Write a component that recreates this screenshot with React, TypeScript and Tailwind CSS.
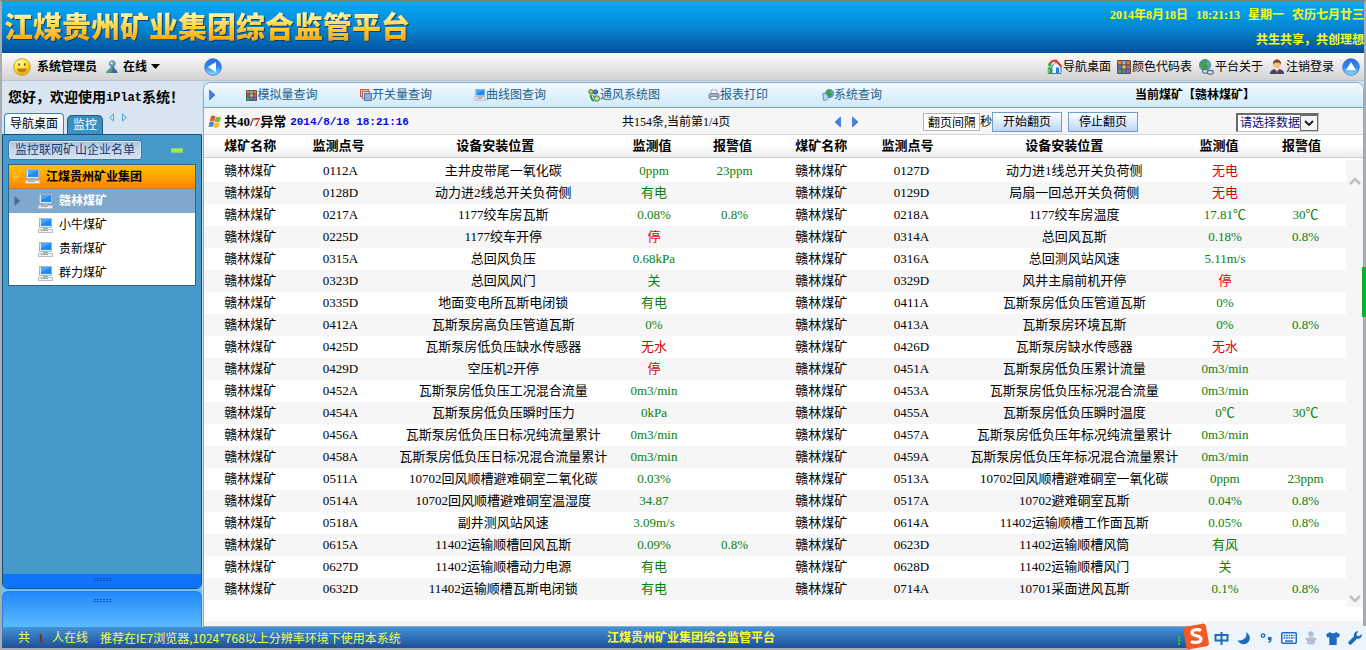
import React from "react";

type Reading = [
  code: string,
  place: string,
  value: string,
  alarm?: string,
  bad?: boolean,
];

const leftRows: Reading[] = [
  ["0112A", "主井皮带尾一氧化碳", "0ppm", "23ppm"],
  ["0128D", "动力进2线总开关负荷侧", "有电"],
  ["0217A", "1177绞车房瓦斯", "0.08%", "0.8%"],
  ["0225D", "1177绞车开停", "停", "", true],
  ["0315A", "总回风负压", "0.68kPa"],
  ["0323D", "总回风风门", "关"],
  ["0335D", "地面变电所瓦斯电闭锁", "有电"],
  ["0412A", "瓦斯泵房高负压管道瓦斯", "0%"],
  ["0425D", "瓦斯泵房低负压缺水传感器", "无水", "", true],
  ["0429D", "空压机2开停", "停", "", true],
  ["0452A", "瓦斯泵房低负压工况混合流量", "0m3/min"],
  ["0454A", "瓦斯泵房低负压瞬时压力", "0kPa"],
  ["0456A", "瓦斯泵房低负压日标况纯流量累计", "0m3/min"],
  ["0458A", "瓦斯泵房低负压日标况混合流量累计", "0m3/min"],
  ["0511A", "10702回风顺槽避难硐室二氧化碳", "0.03%"],
  ["0514A", "10702回风顺槽避难硐室温湿度", "34.87"],
  ["0518A", "副井测风站风速", "3.09m/s"],
  ["0615A", "11402运输顺槽回风瓦斯", "0.09%", "0.8%"],
  ["0627D", "11402运输顺槽动力电源", "有电"],
  ["0632D", "11402运输顺槽瓦斯电闭锁", "有电"],
];

const rightRows: Reading[] = [
  ["0127D", "动力进1线总开关负荷侧", "无电", "", true],
  ["0129D", "局扇一回总开关负荷侧", "无电", "", true],
  ["0218A", "1177绞车房温度", "17.81℃", "30℃"],
  ["0314A", "总回风瓦斯", "0.18%", "0.8%"],
  ["0316A", "总回测风站风速", "5.11m/s"],
  ["0329D", "风井主扇前机开停", "停", "", true],
  ["0411A", "瓦斯泵房低负压管道瓦斯", "0%"],
  ["0413A", "瓦斯泵房环境瓦斯", "0%", "0.8%"],
  ["0426D", "瓦斯泵房缺水传感器", "无水", "", true],
  ["0451A", "瓦斯泵房低负压累计流量", "0m3/min"],
  ["0453A", "瓦斯泵房低负压标况混合流量", "0m3/min"],
  ["0455A", "瓦斯泵房低负压瞬时温度", "0℃", "30℃"],
  ["0457A", "瓦斯泵房低负压年标况纯流量累计", "0m3/min"],
  ["0459A", "瓦斯泵房低负压年标况混合流量累计", "0m3/min"],
  ["0513A", "10702回风顺槽避难硐室一氧化碳", "0ppm", "23ppm"],
  ["0517A", "10702避难硐室瓦斯", "0.04%", "0.8%"],
  ["0614A", "11402运输顺槽工作面瓦斯", "0.05%", "0.8%"],
  ["0623D", "11402运输顺槽风筒", "有风"],
  ["0628D", "11402运输顺槽风门", "关"],
  ["0714A", "10701采面进风瓦斯", "0.1%", "0.8%"],
];

const headings: [string, string][] = [
  ["煤矿名称", "pl-2"],
  ["监测点号", "pr-1"],
  ["设备安装位置", "pr-4"],
  ["监测值", "pr-1"],
  ["报警值", "pr-1"],
  ["煤矿名称", "pl-2"],
  ["监测点号", "pr-2"],
  ["设备安装位置", "pr-5"],
  ["监测值", "pr-3"],
  ["报警值", "pr-2"],
];

function Smiley() {
  return (
    <svg width="18" height="18" viewBox="0 0 18 18" aria-hidden="true">
      <defs>
        <radialGradient id="smile" cx="0.4" cy="0.25" r="0.8">
          <stop offset="0" stopColor="#fffbb0" />
          <stop offset="0.5" stopColor="#ffdf3c" />
          <stop offset="1" stopColor="#e8a008" />
        </radialGradient>
      </defs>
      <circle cx="9" cy="9" r="8.4" fill="url(#smile)" stroke="#c89a18" strokeWidth="0.8" />
      <ellipse cx="6.200" cy="6.500" rx="0.900" ry="1.500" fill="#8a5a08" />
      <ellipse cx="11.800" cy="6.500" rx="0.900" ry="1.500" fill="#8a5a08" />
      <path d="M4 10.500h10c-.6 3-2.600 4-5 4s-4.400-1-5-4z" fill="#c07818" />
    </svg>
  );
}

function Pawn() {
  return (
    <svg width="14" height="14" viewBox="0 0 14 14" aria-hidden="true">
      <path d="M6.500 6C5.500 9 2 9.500 1 13h11.500C12 9.500 8.500 9 8.500 6z" fill="#4c9a92" />
      <path d="M7.500 6C8 9.500 8 11 6 13h6.500C12 9.500 8.500 9 8.500 6z" fill="#3d5ea8" />
      <circle cx="7.300" cy="3.700" r="3" fill="#6a9fc0" stroke="#3f7488" strokeWidth="0.6" />
      <circle cx="6.500" cy="2.900" r="1.200" fill="#d5ecf2" />
    </svg>
  );
}

function RoundArrow({ up }: { up?: boolean }) {
  return (
    <svg width="18" height="18" viewBox="0 0 18 18" aria-hidden="true">
      <defs>
        <linearGradient id={up ? "ballUp" : "ballLeft"} x1="0" y1="0" x2="0" y2="1">
          <stop offset="0" stopColor="#2c6be0" />
          <stop offset="0.5" stopColor="#2b8af2" />
          <stop offset="1" stopColor="#8fe8ff" />
        </linearGradient>
      </defs>
      <circle
        cx="9"
        cy="9"
        r="8.300"
        fill={up ? "url(#ballUp)" : "url(#ballLeft)"}
        stroke="#3a6cc8"
        strokeWidth="0.800"
      />
      <path d={up ? "M9 4l5 8.200H4z" : "M3.800 9l8.200-5v10z"} fill="#fff" />
    </svg>
  );
}

function Windows() {
  return (
    <svg width="14" height="14" viewBox="0 0 14 14" aria-hidden="true">
      <path d="M3 1.200c1.500-1 3-.8 4.200 0L6.300 6.400C5 5.600 3.500 5.600 1.800 6.400z" fill="#e8502a" />
      <path d="M7.700 1.600c1.500.9 3.300.8 5.300-.2l-1.100 5.100c-1.600 1-3.600 1-5.200.2z" fill="#7fb93a" />
      <path d="M1.600 7.100c1.500-.9 3-.8 4.400 0l-1 4.900C3.700 11.300 2.200 11.300.5 12.100z" fill="#4a82cf" />
      <path d="M6.500 7.400c1.500.9 3.500.8 5.200-.2l-1.100 4.900c-1.600 1-3.500 1-5.100.2z" fill="#f6c12c" />
    </svg>
  );
}

function ColorGrid({ size }: { size: number }) {
  const colors = [
    "#f08a20", "#8fb0f0", "#e07a30",
    "#4a78c8", "#f0c040", "#c05aa0",
    "#4fb060", "#4a80e8", "#7a65c8",
  ];
  return (
    <svg width={size} height={size} viewBox="0 0 13 13" aria-hidden="true">
      <rect width="13" height="13" rx="1" fill="#5a5048" />
      {colors.map((c, i) => (
        <rect key={i} x={1 + (i % 3) * 4} y={1 + Math.floor(i / 3) * 4} width="3" height="3" fill={c} />
      ))}
    </svg>
  );
}

function Layers() {
  return (
    <svg width="12" height="12" viewBox="0 0 12 12" aria-hidden="true">
      <rect x="0.500" y="0.500" width="8" height="7" fill="#f0c0a8" stroke="#c8583c" />
      <rect x="2.500" y="2.500" width="7" height="7" fill="#d8dce8" stroke="#b06a68" />
      <rect x="4.500" y="4.500" width="7" height="7" fill="#8fb2e0" stroke="#5a78a8" />
    </svg>
  );
}

function Monitor({ size }: { size: number }) {
  return (
    <svg width={size} height={size} viewBox="0 0 15 15" aria-hidden="true">
      <rect x="1" y="0" width="13" height="10" fill="#a4b6c8" />
      <rect x="2" y="1" width="11" height="8" fill="#dfeaf4" />
      <rect x="3" y="1" width="10" height="7" fill="#1f8cf4" />
      <path d="M3 1h10L3 6z" fill="#4aa8fc" />
      <rect x="5" y="10" width="5" height="2" fill="#a0aebb" />
      <rect x="0" y="11" width="15" height="4" fill="#b4bec8" />
      <rect x="1" y="12" width="13" height="2" fill="#eef1f4" />
      <rect x="3" y="12" width="7" height="1" fill="#a8a8a8" />
    </svg>
  );
}

function Fans() {
  return (
    <svg width="12" height="13" viewBox="0 0 12 13" aria-hidden="true">
      <circle cx="3" cy="2.800" r="2.300" fill="#e8b83a" stroke="#2a6a50" strokeWidth="0.800" />
      <circle cx="7.500" cy="3" r="2.200" fill="#3a82c8" stroke="#1f4a80" strokeWidth="0.800" />
      <path d="M2 5.500l4 1 2 4.500-3 1.500C2.500 11 1.500 8 2 5.500z" fill="#2f9a4a" />
      <circle cx="8.800" cy="9.500" r="2.700" fill="#d8e05a" stroke="#2a6aa0" strokeWidth="1" />
      <path d="M4 6.500l2 4" stroke="#fff" strokeWidth="1" />
    </svg>
  );
}

function Printer() {
  return (
    <svg width="12" height="12" viewBox="0 0 12 12" aria-hidden="true">
      <path d="M3.500 1h5l1 4h-7z" fill="#fff" stroke="#8f97b4" strokeWidth="0.800" />
      <rect x="1" y="4.500" width="10" height="5" rx="1.500" fill="#a9b0cc" stroke="#70789c" strokeWidth="0.900" />
      <rect x="2.800" y="7.500" width="6.400" height="3" fill="#f2f4fa" stroke="#70789c" strokeWidth="0.800" />
      <path d="M7.500 6h2" stroke="#e0a030" />
    </svg>
  );
}

function Globe({ link }: { link?: boolean }) {
  return (
    <svg width={link ? 16 : 12} height={link ? 16 : 12} viewBox="0 0 16 16" aria-hidden="true">
      <circle cx={link ? 7 : 10} cy="6" r="5.500" fill="#5aa8e0" stroke="#2d6a7a" strokeWidth="0.800" />
      <path
        d={link ? "M3 3c2-2 5-2 7-1L8 5l3 2-3 4C4 10 3 8 2 6z" : "M6 3c2-2 5-2 7-1l-2 3 3 2-3 4C8 10 7 8 5 6z"}
        fill="#3f9f48"
      />
      {link ? (
        <g fill="none" stroke="#5f7290" strokeWidth="1.300">
          <rect x="4.500" y="10.500" width="6" height="3.600" rx="1.800" fill="#dfe6f0" />
          <rect x="9.300" y="11.500" width="6" height="3.600" rx="1.800" fill="#dfe6f0" />
        </g>
      ) : (
        <path d="M1 6h5l3 6-4 3H2z" fill="#b8d4f0" stroke="#3a78b8" />
      )}
    </svg>
  );
}

function House() {
  return (
    <svg width="15" height="16" viewBox="0 0 15 16" aria-hidden="true">
      <path d="M5 7l4-4 5 5v6.500H5z" fill="#e8f4fc" stroke="#3a7fb8" strokeWidth="1" />
      <path d="M2 5.500L5.500 2 9 1.500l5.700 6.300" fill="none" stroke="#e0382c" strokeWidth="2" />
      <rect x="9" y="8.500" width="3" height="6" fill="#2f7fd0" />
      <circle cx="2.800" cy="6" r="1.800" fill="#3bb04a" />
      <path d="M.8 8.500h4V15h-4z" fill="#2f9f42" />
      <path d="M2 10v4" stroke="#9fe0a0" />
    </svg>
  );
}

function Person() {
  return (
    <svg width="16" height="16" viewBox="0 0 16 16" aria-hidden="true">
      <path d="M1 15c0-3.500 2.500-4.500 5-5h4c2.500.5 5 1.500 5 5z" fill="#3f466c" />
      <path d="M6 10l2 4 2-4z" fill="#fff" />
      <path d="M7.500 11h1l.5 4H7z" fill="#b8302a" />
      <circle cx="8" cy="5.500" r="3.800" fill="#f0c08a" />
      <path d="M4 5.500C3.500 2 6 .5 8 .5s4.500 1.500 4 5C11 3.500 9 3.500 8 3.500S5 3.500 4 5.500z" fill="#7a431c" />
    </svg>
  );
}

function Triangle({ dir, tone }: { dir: "left" | "right"; tone: "solid" | "thin" }) {
  const d = dir === "left" ? "M6.500 1v10L1 6z" : "M0.500 1v10L6 6z";
  return tone === "solid" ? (
    <svg width="7" height="12" viewBox="0 0 7 12" aria-hidden="true">
      <path d={d} fill="#3f7fe8" stroke="#2a5fc0" strokeWidth="0.600" />
    </svg>
  ) : (
    <svg width="5" height="9" viewBox="0 0 7 12" aria-hidden="true">
      <path d={d} fill="#d8f0fc" stroke="#3a9ad0" strokeWidth="1.400" />
    </svg>
  );
}

const menu: [string, React.ReactNode][] = [
  ["模拟量查询", <ColorGrid size={11} />],
  ["开关量查询", <Layers />],
  ["曲线图查询", <Monitor size={12} />],
  ["通风系统图", <Fans />],
  ["报表打印", <Printer />],
  ["系统查询", <Globe />],
];

const tools: [string, React.ReactNode][] = [
  ["导航桌面", <House />],
  ["颜色代码表", <ColorGrid size={14} />],
  ["平台关于", <Globe link />],
  ["注销登录", <Person />],
];

function Header() {
  return (
    <header className="flex h-[51px] shrink-0 items-start justify-between overflow-hidden bg-linear-to-b from-[#08aaf5] via-[#0686d2] to-[#04509c]">
      <h1 className="bg-linear-to-b from-[#fff3a8] from-25% via-[#ffd84a] to-[#ffa800] to-80% bg-clip-text pt-[5px] pl-0.5 text-[29px] leading-[42px] font-black whitespace-nowrap text-transparent drop-shadow-[1px_1px_0px_#0a3f7a]">
        江煤贵州矿业集团综合监管平台
      </h1>
      <div className="pt-px text-right text-xs leading-[25px] font-bold whitespace-nowrap text-[#f4ff1e]">
        <p className="flex gap-2">
          <span>2014年8月18日</span>
          <span>18:21:13</span>
          <span>星期一</span>
          <span>农历七月廿三</span>
        </p>
        <p>共生共享，共创理想</p>
      </div>
    </header>
  );
}

function Toolbar() {
  return (
    <div className="flex h-7 shrink-0 items-center justify-between border-b border-[#b9c4cc] bg-linear-to-b from-[#fdfdfd] to-[#d2d2d2] pr-1 pl-[11px] text-xs whitespace-nowrap">
      <div className="flex items-center">
        <Smiley />
        <span className="ml-1.5 font-bold">系统管理员</span>
        <button className="ml-2 flex items-center font-bold">
          <Pawn />
          <span className="ml-1">在线</span>
          <svg className="ml-1" width="9" height="5" viewBox="0 0 9 5" aria-hidden="true">
            <path d="M0 0h9L4.500 5z" />
          </svg>
        </button>
        <button className="ml-11" aria-label="收起侧栏">
          <RoundArrow />
        </button>
      </div>
      <nav className="flex items-center gap-1.5">
        {tools.map(([label, icon]) => (
          <a key={label} href="#" className="flex items-center gap-px">
            {icon}
            {label}
          </a>
        ))}
        <button className="ml-0.5" aria-label="收起顶栏">
          <RoundArrow up />
        </button>
      </nav>
    </div>
  );
}

function Grip() {
  return (
    <svg width="17" height="5" viewBox="0 0 17 5" aria-hidden="true">
      <path d="M0 1.500h17M0 3.500h17" stroke="#0a4fb8" strokeDasharray="2 1" />
    </svg>
  );
}

function Sidebar() {
  return (
    <aside className="flex w-[200px] shrink-0 flex-col bg-linear-to-b from-[#d9e6f1] from-20% to-[#5cc0f8]">
      <p className="flex h-8 items-center pt-0.5 pl-1.5 text-sm font-bold whitespace-nowrap">
        您好，欢迎使用
        <span className="font-['Liberation_Mono'] text-xs">iPlat</span>
        系统！
      </p>
      <div className="flex h-[21px] items-end pl-0.5 text-xs">
        <button className="h-[21px] rounded-t-[4px] border border-b-0 border-[#3d84b4] bg-linear-to-b from-white to-[#e2eff8] px-[5px]">
          导航桌面
        </button>
        <button className="ml-[3px] h-[19px] rounded-t-[5px] border border-b-0 border-[#1c5c88] bg-linear-to-b from-[#3f8cbc] to-[#3a93c6] px-[5px] text-white">
          监控
        </button>
        <div className="flex gap-2 self-start pl-1.5">
          <Triangle dir="left" tone="thin" />
          <Triangle dir="right" tone="thin" />
        </div>
      </div>
      <div className="flex flex-1 flex-col overflow-hidden rounded-b-[6px] border border-[#12507f] bg-[#459acb]">
        <div className="flex items-center justify-between pt-[5px] pr-[18px] pl-[5px]">
          <button className="h-5 rounded-[3px] border border-[#3f77a4] bg-linear-to-b from-[#a9c4dc] via-[#c8d9e8] to-[#d6e1ec] px-[6px] text-xs leading-[18px] text-[#12397c] shadow-[inset_0_0_0_1px_#d8e4ee]">
            监控联网矿山企业名单
          </button>
          <button aria-label="折叠" className="h-[5px] w-3 border border-[#8cd070] bg-[#a4ec40]" />
        </div>
        <ul className="mx-[5px] mt-1 border border-[#2a6590] bg-white text-xs">
          <li>
            <a href="#" className="flex h-6 items-center border-b border-[#c87820] bg-linear-to-b from-[#ffc400] to-[#ff8400] pl-1 font-bold">
              <svg width="6" height="10" viewBox="0 0 6 10" aria-hidden="true">
                <path d="M1 0v10M3 2v6M5 4v2" stroke="#fff0a0" strokeDasharray="1 1" />
              </svg>
              <span className="ml-1.5">
                <Monitor size={15} />
              </span>
              <span className="ml-1.5">江煤贵州矿业集团</span>
            </a>
          </li>
          <li>
            <a href="#" className="flex h-6 items-center bg-[#7ea9cc] pl-[5px] font-bold text-white">
              <svg width="6" height="10" viewBox="0 0 6 10" aria-hidden="true">
                <path d="M0.500 0v10L6 5z" fill="#3f6f9c" />
              </svg>
              <span className="ml-[18px]">
                <Monitor size={15} />
              </span>
              <span className="ml-1.5">赣林煤矿</span>
            </a>
          </li>
          {["小牛煤矿", "贵新煤矿", "群力煤矿"].map((name) => (
            <li key={name}>
              <a href="#" className="flex h-6 items-center gap-1.5 pl-[29px]">
                <Monitor size={15} />
                {name}
              </a>
            </li>
          ))}
        </ul>
        <div className="mt-auto flex h-3.5 justify-center bg-[#0f74fb] pt-[3px]">
          <Grip />
        </div>
      </div>
      <div className="mt-0.5 flex h-9 shrink-0 justify-center rounded-t-[6px] border border-b-0 border-[#2a7fe0] bg-linear-to-b from-[#2187fb] to-[#5abcfd] pt-1.5">
        <Grip />
      </div>
    </aside>
  );
}

function MenuBar() {
  return (
    <nav className="flex h-[25px] shrink-0 items-center border-b border-[#6ea8ce] bg-linear-to-b from-[#f2faff] to-[#cfeafa] text-xs whitespace-nowrap text-[#24608c]">
      <span className="w-[21px] pl-[5px]">
        <Triangle dir="right" tone="solid" />
      </span>
      {menu.map(([label, icon]) => (
        <a key={label} href="#" className="flex w-[114px] items-center justify-center">
          {icon}
          {label}
        </a>
      ))}
      <strong className="mr-[108px] ml-auto text-black">当前煤矿【赣林煤矿】</strong>
    </nav>
  );
}

function StatusStrip() {
  const button =
    "h-5 w-[70px] border border-[#6f9cc8] bg-linear-to-b from-white to-[#b8d6fb] leading-[18px]";
  return (
    <div className="flex h-[26px] shrink-0 items-center bg-[#f6f6f6] pt-0.5 pl-1 text-xs whitespace-nowrap">
      <Windows />
      <p className="flex w-[400px] items-center pl-0.5 text-[13px] font-bold">
        共40/<span className="text-[#e01010]">7</span>异常
        <span className="ml-1 font-['Liberation_Mono'] text-[11px] text-[#0a0ad8]">
          2014/8/18 18:21:16
        </span>
      </p>
      <span className="w-[212px]">共154条,当前第1/4页</span>
      <div className="flex gap-[11px]">
        <button aria-label="上一页">
          <Triangle dir="left" tone="solid" />
        </button>
        <button aria-label="下一页">
          <Triangle dir="right" tone="solid" />
        </button>
      </div>
      <div className="mr-11 ml-auto flex items-center">
        <input
          aria-label="翻页间隔"
          defaultValue="翻页间隔"
          className="h-[18px] w-[57px] border border-[#b4b8b4] bg-white px-1 text-xs leading-4"
        />
        <span className="w-3">秒</span>
        <button className={button}>开始翻页</button>
        <button className={`ml-1.5 ${button}`}>停止翻页</button>
        <div className="relative ml-[98px]">
          <select
            aria-label="请选择数据"
            className="block h-[19px] w-[83px] appearance-none border-t-2 border-r border-b border-l-2 border-t-[#6a6a6a] border-r-[#c8c8c8] border-b-[#c8c8c8] border-l-[#6a6a6a] bg-white pl-0.5 text-xs leading-4 text-[#0a0a78]"
          >
            <option>请选择数据</option>
          </select>
          <span className="pointer-events-none absolute top-0.5 right-px flex h-4 w-[18px] items-center justify-center border border-[#6a6a6a] bg-[#f4f4f4]">
            <svg width="10" height="6" viewBox="0 0 10 6" fill="none" aria-hidden="true">
              <path d="M1 1l4 4 4-4" stroke="#222" strokeWidth="2" />
            </svg>
          </span>
        </div>
      </div>
    </div>
  );
}

function Cells({ row, pad }: { row: Reading; pad: string }) {
  const [code, place, value, alarm, bad] = row;
  return (
    <>
      <td className={`${pad} pl-2`}>赣林煤矿</td>
      <td className={pad}>{code}</td>
      <td className={pad}>{place}</td>
      <td className={`${pad} ${bad ? "text-[#d80000]" : "text-[#0a800a]"}`}>{value}</td>
      <td className={`${pad} text-[#0a800a]`}>{alarm}</td>
    </>
  );
}

function Readings() {
  return (
    <div className="flex flex-1 bg-white">
      <div className="flex-1 border-t border-[#d4d4d4]">
        <table className="w-full table-fixed border-separate border-spacing-0 text-center text-[13px] leading-[22px] whitespace-nowrap">
          <colgroup>
            {[0, 1].map((half) => (
              <React.Fragment key={half}>
                <col className="w-[7.4%]" />
                <col className="w-[9.1%]" />
                <col className="w-[19.4%]" />
                <col className="w-[7%]" />
                <col className="w-[7.1%]" />
              </React.Fragment>
            ))}
          </colgroup>
          <thead className="bg-linear-to-b from-white from-40% to-[#ececec]">
            <tr>
              {headings.map(([label, pad], i) => (
                <th key={i} scope="col" className={`border-b border-[#cfcfcf] font-bold ${pad}`}>
                  {label}
                </th>
              ))}
            </tr>
          </thead>
          <tbody>
            {leftRows.map((row, i) => {
              const pad = i === 0 ? "pt-0.5" : "";
              return (
                <tr key={row[0]} className="even:bg-[#f6f6f6]">
                  <Cells row={row} pad={pad} />
                  <Cells row={rightRows[i]} pad={pad} />
                </tr>
              );
            })}
          </tbody>
        </table>
      </div>
      <div className="flex w-[17px] shrink-0 flex-col">
        <div className="h-6 border-y border-t-[#d4d4d4] border-b-[#cfcfcf] bg-linear-to-b from-white from-40% to-[#ececec]" />
        <div className="mt-0.5 mb-3.5 flex flex-1 flex-col items-center justify-between bg-[#f6f6f6] pt-[17px] pb-1">
          <svg width="12" height="8" viewBox="0 0 12 8" fill="none" aria-hidden="true">
            <path d="M1 7l5-5 5 5" stroke="#c0c0c0" strokeWidth="2.500" />
          </svg>
          <svg width="12" height="8" viewBox="0 0 12 8" fill="none" aria-hidden="true">
            <path d="M1 1l5 5 5-5" stroke="#c0c0c0" strokeWidth="2.500" />
          </svg>
        </div>
      </div>
    </div>
  );
}

function InputBar() {
  return (
    <div className="absolute -right-0.5 -bottom-0.5 flex h-6 w-[176px] items-center bg-[#eef4fb] text-[#1c6cc0]">
      <svg className="absolute -top-1 -left-3" width="32" height="29" viewBox="-4 0 32 29" aria-hidden="true">
        <path d="M-3 14v9" stroke="#2fc04a" strokeWidth="2.500" strokeDasharray="2.500 1" />
        <rect x="2.500" y="3" width="23" height="23" rx="3" fill="#f05a24" transform="rotate(-10 14 14)" />
        <path
          d="M19 8.500c-2.500-1.500-9-1.300-9 2.300 0 3.700 9 2.200 9 6.200 0 3.800-6.500 4.200-10 2.300"
          fill="none"
          stroke="#fff"
          strokeWidth="3.200"
        />
      </svg>
      <div className="flex flex-1 items-center justify-between pr-1 pl-6">
        <svg width="15" height="15" viewBox="0 0 15 15" fill="none" stroke="currentColor" strokeWidth="2" aria-hidden="true">
          <path d="M1.500 4h12v5.500h-12zM7.500 1v13" />
        </svg>
        <svg width="14" height="14" viewBox="0 0 14 14" aria-hidden="true">
          <path d="M9 1c2 4-2 9-8.500 8.500C3 14 9 14.500 11.800 10.500 14 7 12.500 3 9 1z" fill="currentColor" />
        </svg>
        <svg width="13" height="12" viewBox="0 0 13 12" aria-hidden="true">
          <circle cx="3" cy="3.500" r="1.700" fill="none" stroke="currentColor" strokeWidth="1.300" />
          <path d="M8 5h3.500v2.500c0 2-1 3-3 3.500l-.5-1c1-.4 1.500-1 1.500-2H8z" fill="currentColor" />
        </svg>
        <svg width="16" height="12" viewBox="0 0 16 12" aria-hidden="true">
          <rect x="0.750" y="0.750" width="14.500" height="10.500" rx="1" fill="#fff" stroke="currentColor" strokeWidth="1.500" />
          <path d="M2.500 3.500h11M2.500 6h11" stroke="currentColor" strokeWidth="1.500" strokeDasharray="1.800 0.700" />
          <path d="M4 9h8" stroke="currentColor" strokeWidth="1.500" />
        </svg>
        <svg width="12" height="14" viewBox="0 0 12 14" fill="#b4bfd4" aria-hidden="true">
          <circle cx="6" cy="3" r="2.800" />
          <path d="M0 8c2-2.500 10-2.500 12 0l-2 1.500V12c-1 2-7 2-8 0V9.500z" />
        </svg>
        <svg width="14" height="13" viewBox="0 0 14 13" fill="currentColor" aria-hidden="true">
          <path d="M4 0c1 1.800 5 1.800 6 0l4 2.500-1.500 3.300-1.800-.8v8H3.300V5l-1.800.8L0 2.500z" />
        </svg>
        <svg width="14" height="14" viewBox="0 0 14 14" fill="currentColor" aria-hidden="true">
          <path d="M10.500.2L8.500 2.700l.3 2 2 .5L13.500 3c1 3-1.500 5.500-4.500 4.800L3.500 13.300C1.500 14.500-.5 12.500.7 10.500L6 5.300C5.300 2.300 7.500-.3 10.500.2z" />
        </svg>
      </div>
    </div>
  );
}

export default function App() {
  return (
    <div className="relative flex min-h-screen flex-col border-2 border-[#a9adb0] border-t-[#7d7f84] bg-[#d4e3ef] font-['Liberation_Serif','Noto_Sans_CJK_SC',sans-serif] text-black">
      <Header />
      <Toolbar />
      <div className="flex flex-1 bg-[#cfdfea]">
        <Sidebar />
        <main className="mt-px ml-px flex min-w-0 flex-1 flex-col overflow-hidden rounded-t-[8px] border border-[#7fb0cf] bg-white">
          <MenuBar />
          <StatusStrip />
          <Readings />
          <div className="h-[5px] shrink-0 bg-[#f4f4f4]" />
        </main>
      </div>
      <footer className="grid h-[21px] shrink-0 grid-cols-3 items-center bg-linear-to-b from-[#4492d8] to-[#1d5097] text-xs whitespace-nowrap text-[#f0ff50]">
        <div className="flex gap-3 pl-4">
          <p className="flex gap-2">
            <span>共</span>
            <b className="text-[#8a2a10]">1</b>
            <span>人在线</span>
          </p>
          <p className="font-['Noto_Sans_CJK_SC',sans-serif]">
            推荐在IE7浏览器,1024*768以上分辨率环境下使用本系统
          </p>
        </div>
        <p className="pl-4 text-center font-bold text-[#ffff30]">江煤贵州矿业集团综合监管平台</p>
      </footer>
      <div className="absolute top-[265px] -right-0.5 h-[50px] w-1 bg-[#0cb02c]" />
      <InputBar />
    </div>
  );
}
